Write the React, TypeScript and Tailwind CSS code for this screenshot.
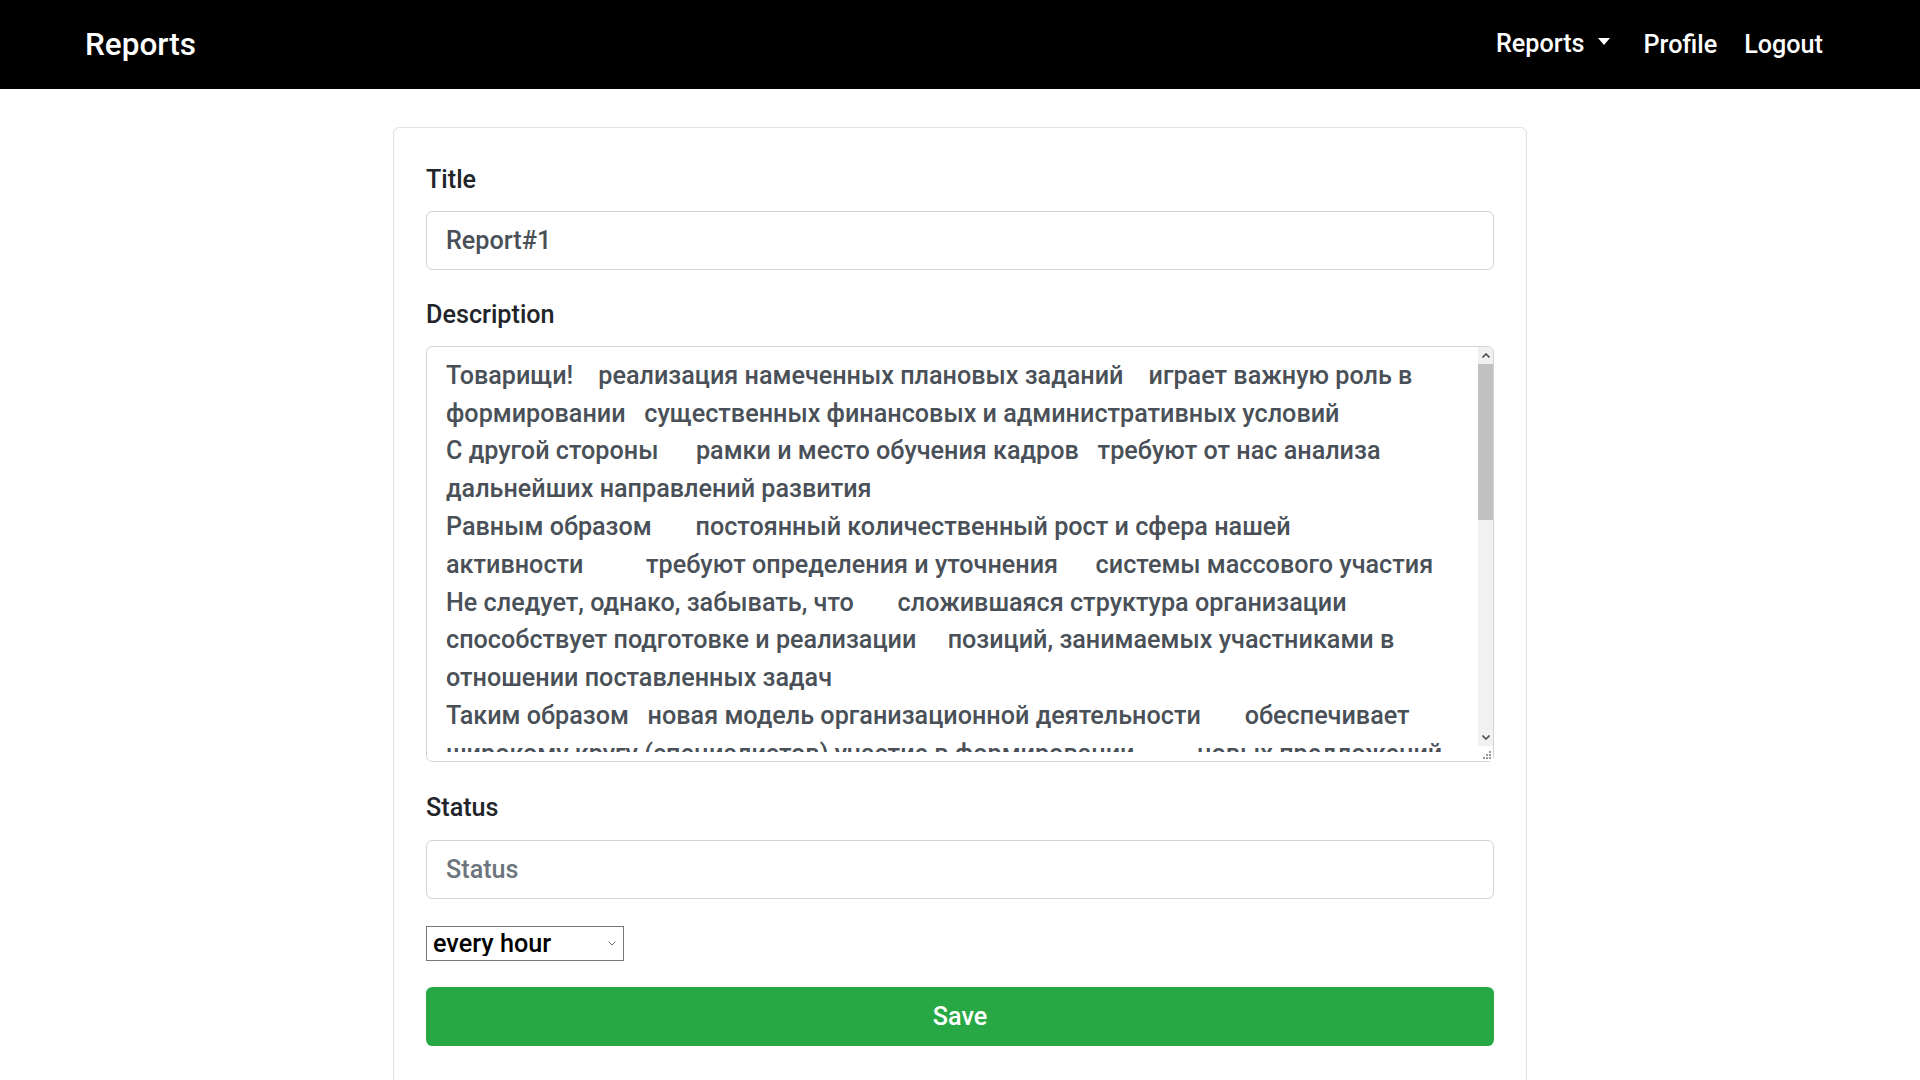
import { useState } from 'react';

// report form text, wrapped the same way the original textarea wraps it
const DESCRIPTION = [
  'Товарищи!    реализация намеченных плановых заданий    играет важную роль в',
  'формировании   существенных финансовых и административных условий',
  'С другой стороны      рамки и место обучения кадров   требуют от нас анализа',
  'дальнейших направлений развития',
  'Равным образом       постоянный количественный рост и сфера нашей',
  'активности          требуют определения и уточнения      системы массового участия',
  'Не следует, однако, забывать, что       сложившаяся структура организации',
  'способствует подготовке и реализации     позиций, занимаемых участниками в',
  'отношении поставленных задач',
  'Таким образом   новая модель организационной деятельности       обеспечивает',
  'широкому кругу (специалистов) участие в формировании          новых предложений',
  'Идейные соображения высшего порядка, а также   укрепление и развитие структуры',
  'позволяет оценить значение     форм развития',
  'Повседневная практика показывает, что    начало повседневной работы по',
  'формированию позиции    в значительной степени обуславливает создание',
  'соответствующий условий активизации',
  'Задача организации, в особенности же    консультация с широким активом',
  'представляет собой интересный эксперимент проверки    новых предложений',
  'Значимость этих проблем настолько очевидна, что    дальнейшее развитие',
  'различных форм деятельности    позволяет выполнять важные задания по',
  'разработке     модели развития',
  'Разнообразный и богатый опыт    постоянное информационно-пропагандистское',
  'обеспечение нашей деятельности    способствует подготовке и реализации',
  'форм развития',
].join('\n');

function Navbar() {
  return (
    <nav className="flex items-center justify-between h-[89px] bg-black pl-[85px] pr-[97px] text-white font-medium">
      <a href="#" className="text-[31.5px] leading-none pt-[1px]">
        Reports
      </a>
      <ul className="flex items-center text-[25.2px] leading-none">
        <li className="flex items-center pb-[2px]">
          <a href="#">Reports</a>
          <span className="ml-[13px] mb-[3px] w-0 h-0 border-t-[7px] border-t-white border-x-[6.5px] border-x-transparent"></span>
        </li>
        <li className="ml-[34px]">
          <a href="#">Profile</a>
        </li>
        <li className="ml-[27px]">
          <a href="#">Logout</a>
        </li>
      </ul>
    </nav>
  );
}

function Chevron({ up }: { up?: boolean }) {
  return (
    <svg width="8" height="5" viewBox="0 0 8 5" className="block">
      <path
        d={up ? 'M0.5 4.5 L4 1 L7.5 4.5' : 'M0.5 0.5 L4 4 L7.5 0.5'}
        fill="none"
        stroke="#505050"
        strokeWidth="1.6"
      />
    </svg>
  );
}

// fake classic scrollbar, headless chrome hides the real one
function ScrollbarOverlay() {
  return (
    <div className="absolute top-0 right-0 bottom-0 w-[15px] flex flex-col bg-[#f1f1f1] rounded-tr-[5px]">
      <div className="h-[17px] flex items-center justify-center">
        <Chevron up />
      </div>
      <div className="h-[156px] bg-[#c1c1c1]"></div>
      <div className="flex-1"></div>
      <div className="h-[17px] flex items-center justify-center">
        <Chevron />
      </div>
      <div className="h-[15px] bg-white relative">
        <svg width="15" height="15" viewBox="0 0 15 15" className="absolute inset-0">
          <rect x="11" y="5" width="2" height="2" fill="#9a9a9a" />
          <rect x="8" y="8" width="2" height="2" fill="#9a9a9a" />
          <rect x="11" y="8" width="2" height="2" fill="#9a9a9a" />
          <rect x="5" y="11" width="2" height="2" fill="#9a9a9a" />
          <rect x="8" y="11" width="2" height="2" fill="#9a9a9a" />
          <rect x="11" y="11" width="2" height="2" fill="#9a9a9a" />
        </svg>
      </div>
    </div>
  );
}

export default function App() {
  const [title, setTitle] = useState('Report#1');
  const [description, setDescription] = useState(DESCRIPTION);
  const [status, setStatus] = useState('');
  const [period, setPeriod] = useState('hour');

  return (
    <div className="min-h-screen bg-white font-[Roboto,Arial,sans-serif] font-medium text-[#212529]">
      <Navbar />

      <div className="w-[1134px] mx-auto mt-[38px] border border-[#dfdfdf] rounded-[6.3px] px-[32px] pt-[33px] pb-[40px]">
        <form onSubmit={(e) => e.preventDefault()} className="flex flex-col">
          <label className="text-[25.2px] leading-[37.8px] mb-[12.6px]">Title</label>
          <input
            type="text"
            value={title}
            onChange={(e) => setTitle(e.target.value)}
            className="h-[59px] w-full px-[19px] text-[25.2px] text-[#495057] bg-white border border-[#ced4da] rounded-[6.3px] outline-none mb-[25.6px]"
          />

          <label className="text-[25.2px] leading-[37.8px] mb-[12.6px]">Description</label>
          <div className="relative h-[416px] py-[9.45px] border border-[#ced4da] rounded-[6.3px] bg-white mb-[27px]">
            <textarea
              value={description}
              onChange={(e) => setDescription(e.target.value)}
              className="block w-full h-full pl-[19px] pr-[34px] text-[25.2px] leading-[37.8px] text-[#495057] bg-white outline-none resize-none overflow-hidden whitespace-pre"
            />
            <ScrollbarOverlay />
          </div>

          <label className="text-[25.2px] leading-[37.8px] mb-[12.6px]">Status</label>
          <input
            type="text"
            placeholder="Status"
            value={status}
            onChange={(e) => setStatus(e.target.value)}
            className="h-[59px] w-full px-[19px] text-[25.2px] text-[#495057] placeholder:text-[#6c757d] bg-white border border-[#ced4da] rounded-[6.3px] outline-none mb-[27.6px]"
          />

          <div className="relative w-[198px] h-[35px] mb-[26px]">
            <select
              value={period}
              onChange={(e) => setPeriod(e.target.value)}
              className="appearance-none w-full h-full pl-[6px] text-[25.2px] leading-none text-black bg-white border border-[#767676]"
            >
              <option value="hour">every hour</option>
              <option value="day">every day</option>
              <option value="week">every week</option>
            </select>
            <svg
              width="8"
              height="5"
              viewBox="0 0 8 5"
              className="absolute right-[8px] top-[15px] pointer-events-none"
            >
              <path d="M0.5 0.5 L4 4 L7.5 0.5" fill="none" stroke="#6b6b6b" strokeWidth="1" />
            </svg>
          </div>

          <button
            type="submit"
            className="w-full h-[59px] bg-[#28a745] text-white text-[25.2px] rounded-[6.3px]"
          >
            Save
          </button>
        </form>
      </div>
    </div>
  );
}
